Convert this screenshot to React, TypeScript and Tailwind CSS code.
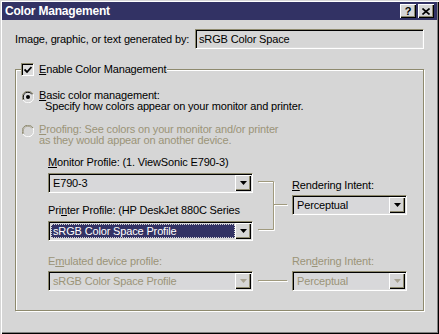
import type { ReactNode } from "react";

const DropButton = ({ disabled }: { disabled?: boolean }) => (
  <div className="flex h-[16px] w-[16px] shrink-0 items-center justify-center bg-[#d6d6d6] shadow-[inset_1px_1px_0_#fff,inset_-1px_-1px_0_#000,inset_-2px_-2px_0_#8e8a6e]">
    <svg width="7" height="4" viewBox="0 0 7 4">
      <polygon points="0,0 7,0 3.5,4" fill={disabled ? "#a8a290" : "#000"} />
    </svg>
  </div>
);

type ComboProps = {
  value: string;
  width: string;
  selected?: boolean;
  disabled?: boolean;
};

const Combo = ({ value, width, selected, disabled }: ComboProps) => (
  <div
    className={`flex h-[20px] items-center border border-t-[#8e8a6e] border-l-[#8e8a6e] border-b-white border-r-white bg-[#d8d8da] p-px shadow-[inset_1px_1px_0_#000,inset_-1px_-1px_0_#dcdcdc] ${width}`}
  >
    <div className="flex h-full flex-1 items-center pl-px">
      {selected ? (
        <div className="flex h-[14px] w-full items-center border border-dotted border-[#d6d6d6] bg-[#323264] pl-px text-white">
          {value}
        </div>
      ) : (
        <span className={`pl-[2px] ${disabled ? "text-[#9b9478]" : "text-black"}`}>{value}</span>
      )}
    </div>
    <DropButton disabled={disabled} />
  </div>
);

const Label = ({ children, disabled }: { children: ReactNode; disabled?: boolean }) => (
  <div className={`h-[13px] leading-[13px] ${disabled ? "text-[#9b9478]" : "text-black"}`}>{children}</div>
);

const Radio = ({ checked, disabled }: { checked?: boolean; disabled?: boolean }) => (
  <svg width="12" height="12" viewBox="0 0 12 12" className="shrink-0">
    <path d="M11 3 A5.5 5.5 0 0 0 1 9" stroke="#8e8a6e" fill="none" />
    <path d="M10 3.5 A4.5 4.5 0 0 0 2 8.5" stroke={disabled ? "#a8a290" : "#000"} fill="none" />
    <path d="M1 9 A5.5 5.5 0 0 0 11 3" stroke="#fff" fill="none" />
    <circle cx="6" cy="6" r="4" fill={disabled ? "#d6d6d6" : "#dcdcdc"} />
    {checked ? <circle cx="6" cy="6" r="2" fill="#000" /> : null}
  </svg>
);

// etched line: olive stroke with a white one under it
const Etched = ({ d }: { d: string }) => (
  <>
    <path d={d} stroke="#fff" fill="none" transform="translate(1 1)" />
    <path d={d} stroke="#a09a7e" fill="none" />
  </>
);

export default function App() {
  return (
    <div
      className="h-[334px] w-[439px] bg-[#d6d6d6] p-[2px] text-[11px] tracking-[-0.15px] shadow-[inset_1px_1px_0_#d6d6d6,inset_2px_2px_0_#fff,inset_-1px_-1px_0_#000,inset_-2px_-2px_0_#808080]"
      style={{ fontFamily: '"Liberation Sans", Arial, sans-serif' }}
    >
      <div className="flex h-[18px] items-center justify-between bg-[#323264] pl-[3px] pr-[3px]">
        <span className="text-[12px] font-bold tracking-[-0.2px] text-white">Color Management</span>
        <div className="flex gap-[2px]">
          <div className="flex h-[14px] w-[16px] items-center justify-center bg-[#d6d6d6] text-[11px] font-bold leading-none shadow-[inset_1px_1px_0_#fff,inset_-1px_-1px_0_#000,inset_-2px_-2px_0_#8e8a6e]">
            ?
          </div>
          <div className="flex h-[14px] w-[16px] items-center justify-center bg-[#d6d6d6] shadow-[inset_1px_1px_0_#fff,inset_-1px_-1px_0_#000,inset_-2px_-2px_0_#8e8a6e]">
            <svg width="8" height="7" viewBox="0 0 8 7">
              <path d="M0.5 0.5 L7.5 6.5 M7.5 0.5 L0.5 6.5" stroke="#000" strokeWidth="1.6" />
            </svg>
          </div>
        </div>
      </div>

      <div className="px-[13px]">
        <div className="mt-[9px] flex h-[20px] items-center">
          <div className="w-[180px]">Image, graphic, or text generated by:</div>
          <div className="flex h-[20px] w-[229px] items-center border border-t-[#8e8a6e] border-l-[#8e8a6e] border-b-white border-r-white pl-[3px] shadow-[inset_1px_1px_0_#000,inset_-1px_-1px_0_#dcdcdc]">
            sRGB Color Space
          </div>
        </div>

        <fieldset className="mt-[14px] h-[248px] w-[409px] border border-[#8e8a6e] shadow-[inset_1px_1px_0_#fff,1px_1px_0_#fff]">
          <legend className="ml-[5px] flex items-center bg-[#d6d6d6] pr-[1px]">
            <div className="flex h-[13px] w-[13px] items-center justify-center border border-t-[#8e8a6e] border-l-[#8e8a6e] border-b-white border-r-white bg-[#dcdcdc] shadow-[inset_1px_1px_0_#000]">
              <svg width="8" height="8" viewBox="0 0 8 8">
                <path d="M0.5 3.5 L3 6 L7.5 1" stroke="#000" strokeWidth="1.8" fill="none" />
              </svg>
            </div>
            <span className="ml-[5px] leading-[13px]">
              <u>E</u>nable Color Management
            </span>
          </legend>

          <div className="pl-[6px]">
            <div className="mt-[14px] flex items-start">
              <div className="mt-[1px]">
                <Radio checked />
              </div>
              <div className="ml-[5px] leading-[11px]">
                <div>
                  <u>B</u>asic color management:
                </div>
                <div className="pl-[6px]">Specify how colors appear on your monitor and printer.</div>
              </div>
            </div>

            <div className="mt-[12px] flex items-start">
              <div className="mt-[1px]">
                <Radio disabled />
              </div>
              <div className="ml-[5px] leading-[11px] text-[#9b9478]">
                <div>
                  <u>P</u>roofing: See colors on your monitor and/or printer
                </div>
                <div>as they would appear on another device.</div>
              </div>
            </div>
          </div>

          <div className="pl-[32px]">
            <div className="mt-[10px] flex">
              <div className="w-[205px]">
                <Label>
                  <u>M</u>onitor Profile: (1. ViewSonic E790-3)
                </Label>
                <div className="mt-[4px]">
                  <Combo value="E790-3" width="w-[205px]" />
                </div>
                <div className="mt-[11px]">
                  <Label>
                    Pri<u>n</u>ter Profile: (HP DeskJet 880C Series
                  </Label>
                </div>
                <div className="mt-[4px]">
                  <Combo value="sRGB Color Space Profile" width="w-[205px]" selected />
                </div>
              </div>
              <div className="mt-[17px] w-[39px]">
                <svg width="39" height="70" viewBox="0 0 39 70">
                  <Etched d="M5 8.5 H20.5 V56.5 H5 M20.5 31.5 H34" />
                </svg>
              </div>
              <div className="mt-[23px] w-[115px]">
                <Label>
                  <u>R</u>endering Intent:
                </Label>
                <div className="mt-[3px]">
                  <Combo value="Perceptual" width="w-[115px]" />
                </div>
              </div>
            </div>

            <div className="mt-[12px] flex">
              <div className="w-[205px]">
                <Label disabled>
                  E<u>m</u>ulated device profile:
                </Label>
                <div className="mt-[3px]">
                  <Combo value="sRGB Color Space Profile" width="w-[205px]" disabled />
                </div>
              </div>
              <div className="mt-[16px] w-[39px]">
                <svg width="39" height="20" viewBox="0 0 39 20">
                  <Etched d="M5 9.5 H34" />
                </svg>
              </div>
              <div className="w-[115px]">
                <Label disabled>
                  Ren<u>d</u>ering Intent:
                </Label>
                <div className="mt-[3px]">
                  <Combo value="Perceptual" width="w-[115px]" disabled />
                </div>
              </div>
            </div>
          </div>
        </fieldset>
      </div>
    </div>
  );
}
